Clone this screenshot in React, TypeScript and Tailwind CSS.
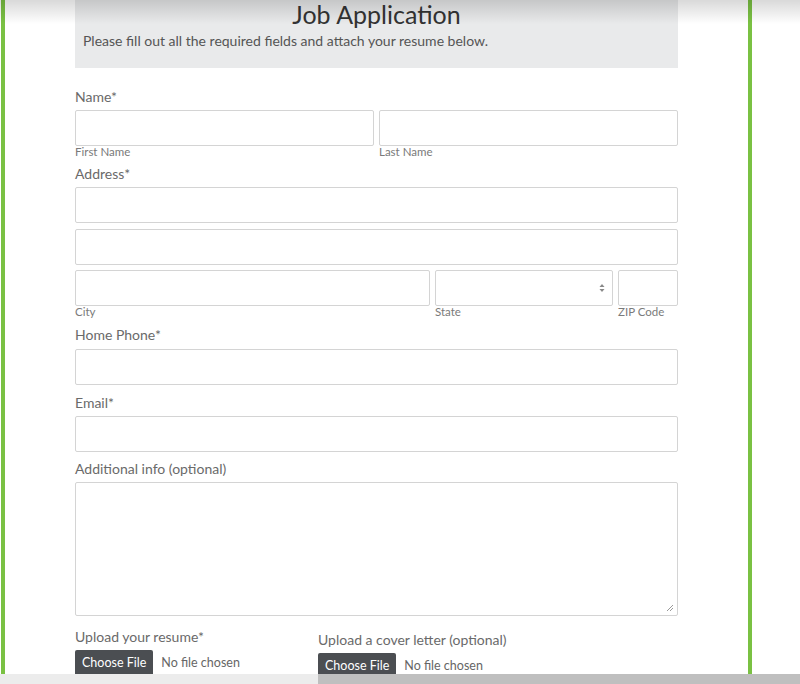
import React from "react"

function Field({ className = "" }: { className?: string }) {
  return <div className={`h-[36px] rounded-[2px] border border-[#d4d4d4] bg-white ${className}`} />
}

function Label({ text, className = "" }: { text: string; className?: string }) {
  return <div className={`text-[14px] leading-[16px] text-[#6a6a6a] ${className}`}>{text}</div>
}

function Sub({ text }: { text: string }) {
  return <div className="text-[11.5px] leading-[12px] text-[#7a7a7a]">{text}</div>
}

function FilePicker() {
  return (
    <div className="mt-[5px] flex items-center gap-[8px]">
      <span className="rounded-[2px] bg-[#4b4e52] px-[7px] py-[5px] text-[12.5px] leading-[16px] text-white">Choose File</span>
      <span className="text-[12.5px] text-[#666]">No file chosen</span>
    </div>
  )
}

export default function App() {
  return (
    <div className="relative h-[684px] w-[800px] overflow-hidden bg-white font-['Lato',sans-serif]">
      <div className="h-[674px] overflow-hidden pl-[1px]">
        <div className="h-full w-[751px] border-x-4 border-[#7ac143] px-[70px]">
          {/* header */}
          <div className="h-[68px] bg-[#e9eaeb]">
            <h1 className="text-center text-[25px] leading-[28px] text-[#333]">Job Application</h1>
            <p className="mt-[4px] pl-[8px] text-[14px] leading-[18px] text-[#555]">
              Please fill out all the required fields and attach your resume below.
            </p>
          </div>

          <Label text="Name*" className="mt-[21px]" />
          <div className="mt-[5px] grid grid-cols-2 gap-[5px]">
            <div>
              <Field />
              <Sub text="First Name" />
            </div>
            <div>
              <Field />
              <Sub text="Last Name" />
            </div>
          </div>

          <Label text="Address*" className="mt-[8px]" />
          <Field className="mt-[5px]" />
          <Field className="mt-[6px]" />
          <div className="mt-[5px] grid grid-cols-[1fr_178px_60px] gap-[5px]">
            <div>
              <Field />
              <Sub text="City" />
            </div>
            <div>
              <div className="flex h-[36px] items-center justify-end rounded-[2px] border border-[#d4d4d4] bg-white pr-[7px]">
                <svg width="6" height="10" viewBox="0 0 6 10" fill="#888">
                  <path d="M3 1 L5.5 4 H0.5 Z" />
                  <path d="M3 9 L5.5 6 H0.5 Z" />
                </svg>
              </div>
              <Sub text="State" />
            </div>
            <div>
              <Field />
              <Sub text="ZIP Code" />
            </div>
          </div>

          <Label text="Home Phone*" className="mt-[9px]" />
          <Field className="mt-[6px]" />

          <Label text="Email*" className="mt-[10px]" />
          <Field className="mt-[5px]" />

          <Label text="Additional info (optional)" className="mt-[9px]" />
          <div className="relative mt-[5px] h-[134px] rounded-[2px] border border-[#d4d4d4] bg-white">
            <svg className="absolute bottom-[3px] right-[3px]" width="8" height="8" viewBox="0 0 8 8" stroke="#999" strokeWidth="1">
              <path d="M1 7 L7 1 M4 7 L7 4" />
            </svg>
          </div>

          <div className="mt-[13px] flex">
            <div className="w-[243px]">
              <Label text="Upload your resume*" />
              <FilePicker />
            </div>
            <div className="pt-[3px]">
              <Label text="Upload a cover letter (optional)" />
              <FilePicker />
            </div>
          </div>
        </div>
      </div>
      <div className="flex h-[10px]">
        <div className="w-[318px] bg-[#ececec]" />
        <div className="flex-1 bg-[#bfbfbf]" />
      </div>
      <div className="pointer-events-none absolute inset-x-0 top-0 h-[24px] bg-linear-to-b from-black/15 to-transparent" />
    </div>
  )
}
